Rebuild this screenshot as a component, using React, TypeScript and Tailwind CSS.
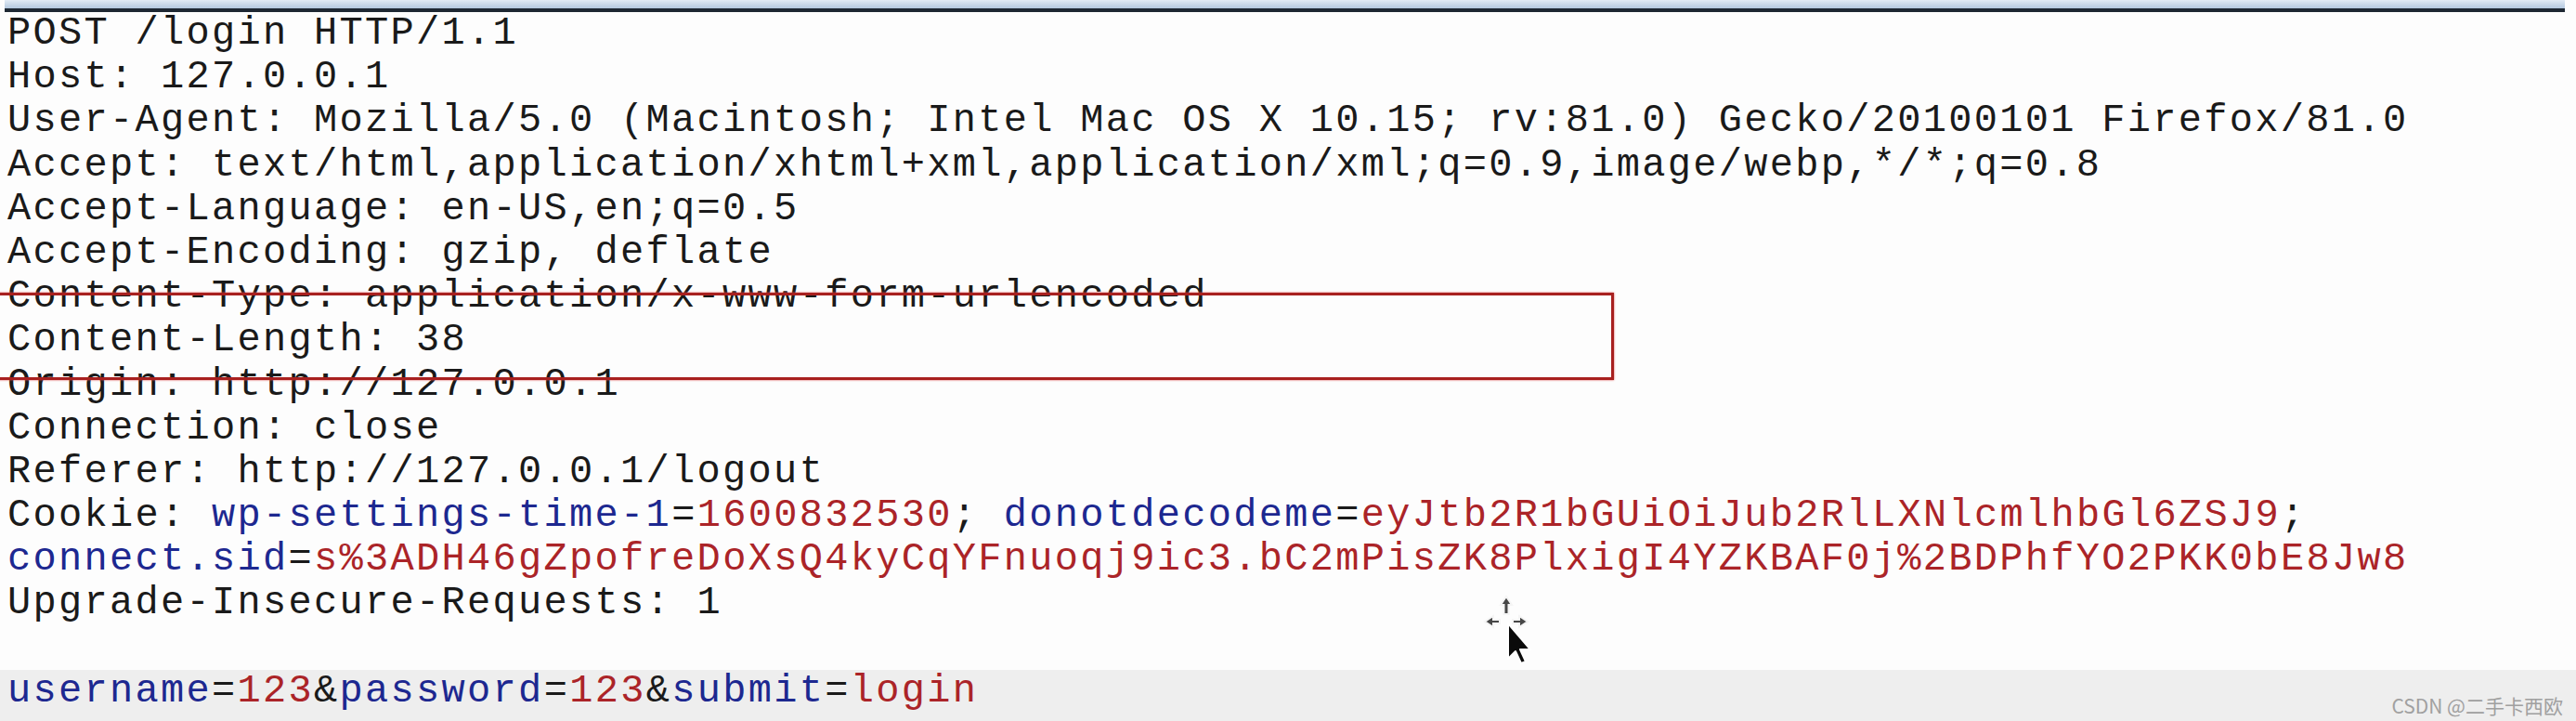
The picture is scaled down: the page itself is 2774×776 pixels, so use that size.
const K = "text-[#1d2890]"
const V = "text-[#ab2428]"

function Line({ children }: { children?: React.ReactNode }) {
  return <div className="h-[47.2px] whitespace-pre">{children}</div>
}

function MoveCursor() {
  return (
    <svg className="absolute left-[1594px] top-[638px]" width="70" height="80" viewBox="0 0 70 80">
      <g fill="#1a1a1a" stroke="#f4f4f4" strokeWidth="2" opacity="0.8">
        <path d="M28 4 L34 13 L30.5 13 L30.5 23 L25.5 23 L25.5 13 L22 13 Z" />
        <path d="M5 31 L14 25 L14 29 L21 29 L21 33 L14 33 L14 37 Z" />
        <path d="M51 31 L42 25 L42 29 L35 29 L35 33 L42 33 L42 37 Z" />
      </g>
      <path
        d="M30 33 L30 71 L38 63 L44 76 L49 74 L43 61 L54 61 Z"
        fill="#0a0a0a"
        stroke="#fff"
        strokeWidth="2"
        strokeLinejoin="round"
      />
    </svg>
  )
}

export default function App() {
  return (
    <div className="relative flex h-[776px] w-[2774px] flex-col overflow-hidden bg-[#fdfdfd] text-[#1a1a1a]">
      <div className="ml-[5px] mr-[12px]">
        <div className="h-[9px] bg-gradient-to-b from-[#e2ebf5] to-[#b3c8de]" />
        <div className="h-[4px] bg-[#1e2833]" />
      </div>
      <div className="flex flex-1 flex-col pl-[8px] font-['Liberation_Mono',monospace] text-[42px] leading-[47.2px] tracking-[2.3px]">
        <Line>POST /login HTTP/1.1</Line>
        <Line>Host: 127.0.0.1</Line>
        <Line>User-Agent: Mozilla/5.0 (Macintosh; Intel Mac OS X 10.15; rv:81.0) Gecko/20100101 Firefox/81.0</Line>
        <Line>Accept: text/html,application/xhtml+xml,application/xml;q=0.9,image/webp,*/*;q=0.8</Line>
        <Line>Accept-Language: en-US,en;q=0.5</Line>
        <Line>Accept-Encoding: gzip, deflate</Line>
        <Line>Content-Type: application/x-www-form-urlencoded</Line>
        <Line>Content-Length: 38</Line>
        <Line>Origin: http://127.0.0.1</Line>
        <Line>Connection: close</Line>
        <Line>Referer: http://127.0.0.1/logout</Line>
        <Line>
          Cookie: <span className={K}>wp-settings-time-1</span>=<span className={V}>1600832530</span>;{" "}
          <span className={K}>donotdecodeme</span>=<span className={V}>eyJtb2R1bGUiOiJub2RlLXNlcmlhbGl6ZSJ9</span>;
        </Line>
        <Line>
          <span className={K}>connect.sid</span>=
          <span className={V}>s%3ADH46gZpofreDoXsQ4kyCqYFnuoqj9ic3.bC2mPisZK8PlxigI4YZKBAF0j%2BDPhfYO2PKK0bE8Jw8</span>
        </Line>
        <Line>Upgrade-Insecure-Requests: 1</Line>
        <Line />
        <div className="-ml-[8px] flex-1 whitespace-pre bg-[#eeeeee] pl-[8px]">
          <span className={K}>username</span>=<span className={V}>123</span>&amp;<span className={K}>password</span>=
          <span className={V}>123</span>&amp;<span className={K}>submit</span>=<span className={V}>login</span>
        </div>
      </div>

      {/* annotation box drawn over the headers */}
      <div className="absolute left-[-4px] top-[315px] h-[94px] w-[1742px] border-[3px] border-[#a8201f] shadow-[0_0_2px_#e05050]" />

      <MoveCursor />

      <div className="absolute bottom-[6px] right-[14px] font-['Noto_Sans_CJK_SC',sans-serif] text-[21px] leading-none text-[#a0a0a0]">
        CSDN @二手卡西欧
      </div>
    </div>
  )
}
